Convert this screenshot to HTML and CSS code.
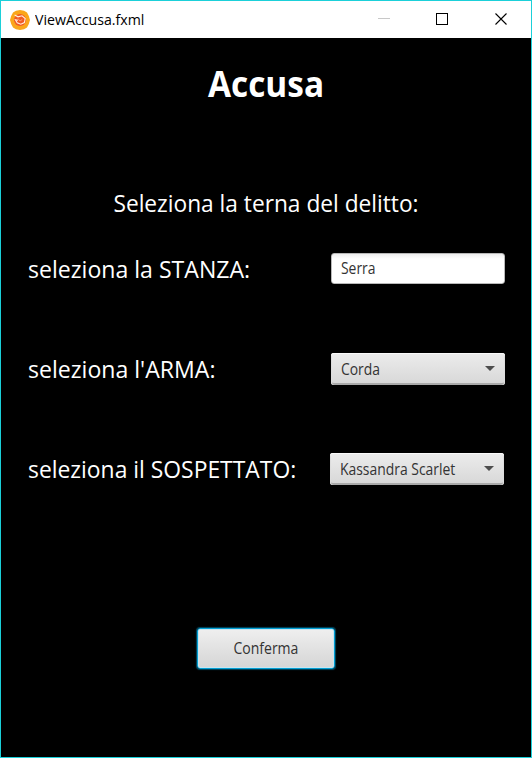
FILE: index.html
```html
<!DOCTYPE html>
<html lang="it">
<head>
<meta charset="utf-8">
<title>ViewAccusa.fxml</title>
<link rel="stylesheet" href="styles.css">
</head>
<body>
<div class="window">
  <header class="titlebar">
    <svg class="app-icon" width="20" height="20" viewBox="0 0 20 20">
      <path d="M10 0 14 .8 17 2.6 18.8 6 20 10 18.8 14 17 17.4 14 19.2 10 20 6 19.2 3 17.4 1.2 14 0 10 1.2 6 3 2.6 6 .8Z" fill="#faa61a"/>
      <circle cx="10" cy="10" r="6" fill="#f15a24"/>
      <path d="M4.6 5 8 6.8 12 5.8 15.2 8.5 14.4 12.6 10.8 14.2 7.2 12.8 5.4 9.8 8 10.2" fill="none" stroke="#fff0df" stroke-width="1.1"/>
      <path d="M8 8.6 10 11 12.3 9.4" fill="none" stroke="#ffb98e" stroke-width=".7"/>
    </svg>
    <span class="caption">ViewAccusa.fxml</span>
    <svg class="controls" width="130" height="14" viewBox="0 0 130 14" shape-rendering="crispEdges">
      <path d="M0 6.5H12" stroke="#c8c8c8"/>
      <rect x="58.5" y="1.5" width="11" height="11" fill="none" stroke="#000"/>
      <path d="M117.5 1.5 128.5 12.5M128.5 1.5 117.5 12.5" stroke="#000" stroke-width="1.1" shape-rendering="auto"/>
    </svg>
  </header>
  <main class="content">
    <h1 class="heading">Accusa</h1>
    <p class="intro">Seleziona la terna del delitto:</p>
    <div class="row">
      <label class="label">seleziona la STANZA:</label>
      <div class="field text-field"><span class="value">Serra</span></div>
    </div>
    <div class="row">
      <label class="label">seleziona l'ARMA:</label>
      <div class="field combo"><span class="value">Corda</span><i class="arrow"></i></div>
    </div>
    <div class="row suspect-row">
      <label class="label">seleziona il SOSPETTATO:</label>
      <div class="field combo"><span class="value">Kassandra Scarlet</span><i class="arrow"></i></div>
    </div>
    <button class="confirm"><span>Conferma</span></button>
  </main>
</div>
</body>
</html>
```

FILE: styles.css
```css
* { box-sizing: border-box; }
body { margin: 0; font-family: "Open Sans", "Noto Sans", sans-serif; }
.window {
  width: 532px; height: 758px; background: #000;
  border: 1px solid #1bd0d9; display: flex; flex-direction: column;
}
.titlebar {
  height: 37px; background: #fff; display: flex; align-items: center;
  padding: 0 23px 0 9px; flex: none;
}
.app-icon { display: block; }
.caption {
  margin: 0 0 2px 5px; font-size: 15px; line-height: 20px; color: #000; white-space: nowrap;
  transform: scaleX(.944); transform-origin: left;
}
.controls { margin-left: auto; display: block; transform: translateY(-1px); }
.content { display: flex; flex-direction: column; color: #fff; }
.heading { margin: 22px 0 0; text-align: center; font-size: 35px; line-height: 48px; font-weight: 700; transform: scaleX(.955); }
.intro { margin: 79px 0 0; text-align: center; font-size: 24px; line-height: 32px; white-space: nowrap; transform: scaleX(.946); }
.row { display: flex; justify-content: space-between; height: 32px; margin: 34px 26px 0 27px; }
.row + .row { margin-top: 68px; }
.suspect-row { margin-right: 27px; }
.label { font-size: 24px; line-height: 32px; white-space: nowrap; transform: scaleX(.962); transform-origin: left; }
.suspect-row .label { transform: scaleX(.953); }
.field {
  width: 174px; height: 32px; border-radius: 3px; display: flex; align-items: center;
  justify-content: space-between; padding: 0 10px; flex: none;
  color: #333; font-size: 15.5px; line-height: 20px; white-space: nowrap;
}
.value { padding-bottom: 1px; transform: scaleX(.897); transform-origin: left; }
.text-field { height: 31px; background: linear-gradient(#eee, #fff 5px); border: 1px solid #b8b8b8; padding-left: 9px; }
.combo {
  background: linear-gradient(#ececec, #d7d7d7);
  box-shadow: inset 0 1px #fafafa, inset 1px 0 #ddd, inset -1px 0 #ddd, inset 0 -2px #a9a9a9;
}
.arrow { border: 5px solid transparent; border-top-color: #4d4d4d; border-bottom: 0; margin-bottom: 1px; flex: none; }
.suspect-row .value { margin-right: -14px; }
.confirm {
  align-self: center; width: 138px; height: 41px; margin-top: 143px; padding: 0 0 2px;
  font: 15.5px/20px "Open Sans", "Noto Sans", sans-serif; color: #333;
  background: linear-gradient(#efefef, #d5d5d5); border: 1px solid #039ed3; border-radius: 3px;
  box-shadow: 0 0 1px 1px rgba(3, 158, 211, .45), inset 0 0 0 1px #c8e5ef;
}
.confirm span { display: inline-block; transform: scaleX(.905); }
```
